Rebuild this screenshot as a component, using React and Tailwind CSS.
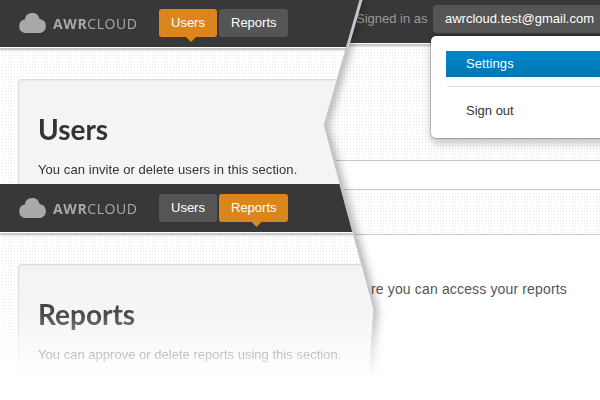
const dots =
  "bg-white bg-[radial-gradient(circle_at_2.5px_1.5px,#e9e9e9_0.7px,transparent_0.8px)] bg-[size:3px_3px]";

function Logo() {
  return (
    <div className="flex items-start text-[#a9a9a9]">
      <svg width="29" height="20" viewBox="0 0 29 20" className="mr-[6px]" fill="currentColor">
        <path d="M6.500 20A6.500 6.900 0 0 1 6.800 6.400 7.500 7.500 0 0 1 21.500 5.900 7.200 7.200 0 0 1 22.500 20Z" />
      </svg>
      <span className="w-[106px] font-['Open_Sans',sans-serif] text-[14px] leading-[21px] font-medium tracking-[0.6px] whitespace-nowrap">
        <b className="font-bold">AWR</b>CLOUD
      </span>
    </div>
  );
}

function Tab({ label, active, width }) {
  return (
    <div
      className={`relative h-7 ${width} rounded-[3px] pl-3 text-[13px] leading-7 text-white ${
        active ? "bg-[#da861d]" : "bg-[#555]"
      }`}
    >
      {label}
      {active && (
        <span className="absolute top-7 left-1/2 -ml-[2px] h-[5px] w-[10px] bg-[#da861d] [clip-path:polygon(0_0,100%_0,50%_100%)]" />
      )}
    </div>
  );
}

function Screen({ title, text, active, className, headerClass, textClass }) {
  return (
    <section className={`flex flex-col ${dots} ${className}`}>
      <header
        className={`flex shrink-0 items-start bg-[#383838] pl-[18px] shadow-[0_1px_0_#fff,0_2px_0_#c4c4c4,0_3px_2px_rgba(0,0,0,0.28)] ${headerClass}`}
      >
        <div className="mt-1">
          <Logo />
        </div>
        <nav className="flex gap-[2px]">
          <Tab label="Users" active={active === "users"} width="w-[58px]" />
          <Tab label="Reports" active={active === "reports"} width="w-[69px]" />
        </nav>
      </header>
      <div className="mt-8 ml-[18px] flex-1 rounded-tl-[4px] border-t border-l border-[#dcdcdc] bg-[#f4f4f4] pl-[19px] shadow-[inset_0_1px_1px_rgba(0,0,0,0.05)]">
        <h1 className="mt-[32px] font-['Lato',sans-serif] text-[28px] leading-[34px] font-bold text-[#333]">
          {title}
        </h1>
        <p className={`mt-[14px] text-[13px] leading-5 whitespace-nowrap text-[#333] ${textClass}`}>{text}</p>
      </div>
    </section>
  );
}

function AccountPage() {
  return (
    <main className={`col-start-1 row-start-1 flex h-[400px] flex-col ${dots}`}>
      <header className="relative z-10 flex h-[43px] shrink-0 bg-[#383838] pt-[5px] pl-[356px] text-[13px] leading-7 whitespace-nowrap shadow-[0_1px_0_#fff,0_2px_0_#c4c4c4,0_3px_2px_rgba(0,0,0,0.28)]">
        <span className="w-[77px] text-[#999]">Signed in as</span>
        <span className="h-7 flex-1 rounded-l-[4px] bg-[#555] pl-3 text-white">awrcloud.test@gmail.com</span>
        <div className="absolute top-9 left-[431px] h-[102px] w-[190px] rounded-[5px] bg-white pt-[15px] pl-[15px] text-[#333] shadow-[0_0_0_1px_rgba(0,0,0,0.2),0_5px_10px_rgba(0,0,0,0.25)]">
          <div className="h-[26px] bg-gradient-to-b from-[#0088cc] to-[#0077b3] pl-5 leading-[26px] tracking-[0.1px] text-white">
            Settings
          </div>
          <div className="mt-[9px] ml-px h-px bg-[#e0e0e0]" />
          <div className="mt-[10px] pl-5 leading-7">Sign out</div>
        </div>
      </header>
      <div className="mt-[117px] h-[30px] border-y border-[#c8c8c8] bg-white" />
      <div className="mt-[44px] flex-1 border-t border-[#c8c8c8] bg-white pt-[44px] pl-[371px] text-[14px] leading-5 tracking-[0.15px] whitespace-nowrap text-[#555]">
        re you can access your reports
      </div>
    </main>
  );
}

export default function App() {
  return (
    <div className="grid h-[400px] w-[600px] grid-cols-1 overflow-hidden bg-white font-['Liberation_Sans',Arial,sans-serif]">
      <AccountPage />
      <div className="z-20 col-start-1 row-start-1 h-[400px] w-[400px] [mask-image:linear-gradient(to_bottom,#000_280px,rgba(0,0,0,0.88)_315px,rgba(0,0,0,0.32)_354px,transparent_378px)]">
        <div className="drop-shadow-[2px_1px_4px_rgba(0,0,0,0.3)]">
          <div className="bg-[#c6c6c6] [clip-path:polygon(0_0,362.500px_0,326.500px_125px,376px_309px,370px_400px,0_400px)]">
            <div className="flex h-[400px] flex-col [clip-path:polygon(0_0,359.500px_0,323.500px_125px,373px_309px,367px_400px,0_400px)]">
              <Screen
                title="Users"
                text="You can invite or delete users in this section."
                active="users"
                className="h-[184px] overflow-hidden"
                headerClass="h-[47px] pt-[9px]"
                textClass="tracking-[0.07px]"
              />
              <Screen
                title="Reports"
                text="You can approve or delete reports using this section."
                active="reports"
                className="h-[216px]"
                headerClass="h-12 pt-[10px]"
                textClass="tracking-[0.02px]"
              />
            </div>
          </div>
        </div>
      </div>
    </div>
  );
}
